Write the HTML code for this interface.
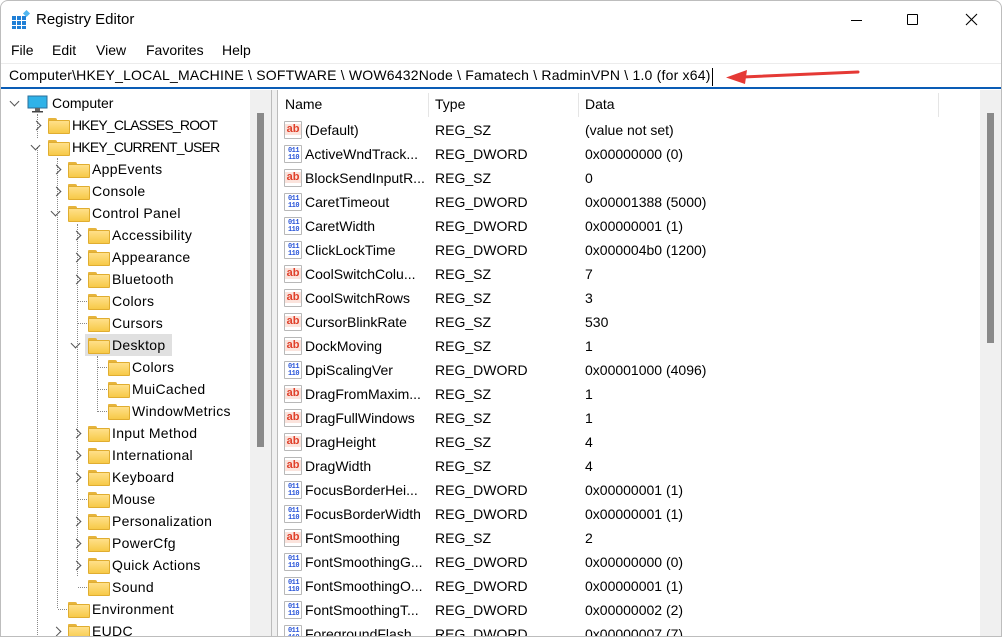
<!DOCTYPE html>
<html><head><meta charset="utf-8">
<style>
*{margin:0;padding:0;box-sizing:border-box}
body{width:1002px;height:639px;background:#fff;font-family:"Segoe UI","Liberation Sans",sans-serif;font-size:14px;color:#000;position:relative;overflow:hidden}
.win{position:absolute;left:0;top:0;width:1002px;height:637px;border:1px solid #bdbdbd;border-radius:8px 8px 0 0;background:#fff;overflow:hidden}
.a{position:absolute;white-space:nowrap}
.fold{position:absolute;width:20px;height:14px}
.fold:before{content:"";position:absolute;left:0;top:0;width:9px;height:3px;background:#e6b43c;border-radius:1px 2px 0 0}
.fold:after{content:"";position:absolute;left:0;top:2px;width:20px;height:12px;background:linear-gradient(#ffe08a,#f7c948);border:1px solid #e0ad30;border-radius:1px}
.ch{position:absolute;width:7px;height:7px;border-right:1.3px solid #555;border-bottom:1.3px solid #555}
.r{transform:rotate(-45deg)}
.d{transform:rotate(45deg)}
.t{position:absolute;white-space:nowrap;line-height:22px}
.ic{position:absolute;width:18px;height:18px;border:1px solid #b8b8b8;background:#fff;border-radius:1px;font-weight:bold;text-align:center}
.ab{color:#e0402a;background:#fbe3dc;font-size:11px;line-height:11px;height:11px;width:16px;position:absolute;left:0;top:2px;font-family:"Liberation Sans",sans-serif}
.bn{color:#2a55d8;font-size:7px;line-height:7px;position:absolute;left:1px;top:2px;width:15px;font-family:"Liberation Mono",monospace;letter-spacing:-0.5px}
.row{position:absolute;left:283px;height:24px;line-height:24px;width:690px}
.row span{position:absolute;top:0}
</style></head><body>
<div class="win">
<svg class="a" style="left:10px;top:9px" width="20" height="20" viewBox="0 0 20 20">
<g fill="#1f7fd6"><rect x="1" y="6" width="4" height="4"/><rect x="6" y="6" width="4" height="4"/><rect x="1" y="11" width="4" height="4"/><rect x="6" y="11" width="4" height="4"/><rect x="11" y="11" width="4" height="4"/><rect x="1" y="16" width="4" height="3"/><rect x="6" y="16" width="4" height="3"/><rect x="11" y="16" width="4" height="3"/><rect x="11" y="6" width="4" height="4"/></g>
<rect x="13" y="1" width="5" height="5" fill="#52b7f0" transform="rotate(45 15.5 3.5)"/></svg>
<div class="a" style="left:35px;top:10px;font-size:15px">Registry Editor</div>
<div class="a" style="left:850px;top:19px;width:11px;height:1px;background:#000"></div>
<div class="a" style="left:906px;top:13px;width:11px;height:11px;border:1px solid #000;border-radius:1px"></div>
<svg class="a" style="left:964px;top:12px" width="13" height="13"><path d="M1 1L12 12M12 1L1 12" stroke="#000" stroke-width="1.1"/></svg>
<div class="a" style="left:10px;top:41px">File</div>
<div class="a" style="left:51px;top:41px">Edit</div>
<div class="a" style="left:95px;top:41px">View</div>
<div class="a" style="left:145px;top:41px">Favorites</div>
<div class="a" style="left:221px;top:41px">Help</div>
<div class="a" style="left:0;top:62px;width:1002px;height:1px;background:#ececec"></div>
<div class="a" style="left:8px;top:66px;font-size:14px;letter-spacing:0.2px">Computer\HKEY_LOCAL_MACHINE \ SOFTWARE \ WOW6432Node \ Famatech \ RadminVPN \ 1.0 (for x64)</div>
<div class="a" style="left:711px;top:67px;width:1px;height:18px;background:#000"></div>
<svg class="a" style="left:722px;top:66px" width="140" height="18"><path d="M135 5L20 10" stroke="#e53935" stroke-width="3" stroke-linecap="round"/><path d="M3 10.5L24 3L22 17Z" fill="#e53935"/></svg>
<div class="a" style="left:0;top:86px;width:1002px;height:2px;background:#0a5cb5"></div>
<div class="a" style="left:249px;top:89px;width:21px;height:550px;background:#f0f0f0"></div>
<div class="a" style="left:256px;top:112px;width:7px;height:334px;background:#8a8a8a"></div>
<div class="a" style="left:270px;top:89px;width:1px;height:550px;background:#bcbcbc"></div>
<div class="a" style="left:271px;top:89px;width:5px;height:550px;background:#f0f0f0"></div>
<div class="a" style="left:276px;top:89px;width:1px;height:550px;background:#bcbcbc"></div>
<div class="a" style="left:36px;top:113px;height:24px;border-left:1px dotted #888"></div>
<div class="a" style="left:36px;top:146px;height:490px;border-left:1px dotted #888"></div>
<div class="a" style="left:56px;top:157px;height:450px;border-left:1px dotted #888"></div>
<div class="a" style="left:76px;top:223px;height:352px;border-left:1px dotted #888"></div>
<div class="a" style="left:96px;top:355px;height:56px;border-left:1px dotted #888"></div>
<svg class="a" style="left:26px;top:94px" width="21" height="18"><rect x="1" y="1" width="19" height="12" fill="#2fb2e8" stroke="#2b6f9a"/><rect x="8" y="13" width="5" height="3" fill="#666"/><rect x="5" y="16" width="11" height="1.5" fill="#444"/></svg>
<div class="ch d" style="left:10px;top:97px"></div>
<div class="t" style="left:51px;top:91px">Computer</div>
<div class="a" style="left:84px;top:333px;width:87px;height:22px;background:#e0e0e0"></div>
<div id="tree"></div>
<div class="a" style="left:427px;top:92px;width:1px;height:24px;background:#e5e5e5"></div>
<div class="a" style="left:577px;top:92px;width:1px;height:24px;background:#e5e5e5"></div>
<div class="a" style="left:937px;top:92px;width:1px;height:24px;background:#e5e5e5"></div>
<div class="a" style="left:284px;top:95px">Name</div>
<div class="a" style="left:434px;top:95px">Type</div>
<div class="a" style="left:584px;top:95px">Data</div>
<div class="a" style="left:979px;top:89px;width:21px;height:550px;background:#f0f0f0"></div>
<div class="a" style="left:986px;top:112px;width:7px;height:230px;background:#8a8a8a"></div>
<div id="list"></div>
</div>
<script>
var tree=[[1,"HKEY_CLASSES_ROOT","r"],[1,"HKEY_CURRENT_USER","d"],[2,"AppEvents","r"],[2,"Console","r"],[2,"Control Panel","d"],[3,"Accessibility","r"],[3,"Appearance","r"],[3,"Bluetooth","r"],[3,"Colors",""],[3,"Cursors",""],[3,"Desktop","d"],[4,"Colors",""],[4,"MuiCached",""],[4,"WindowMetrics",""],[3,"Input Method","r"],[3,"International","r"],[3,"Keyboard","r"],[3,"Mouse",""],[3,"Personalization","r"],[3,"PowerCfg","r"],[3,"Quick Actions","r"],[3,"Sound",""],[2,"Environment",""],[2,"EUDC","r"]];
var h="";
tree.forEach(function(e,i){var y=113+22*i,fx=27+20*e[0];
var ls=e[1].indexOf("HKEY")==0?"letter-spacing:-0.8px;":"letter-spacing:0.3px;";
if(e[2]=="r")h+='<div class="ch r" style="left:'+(fx-15)+'px;top:'+(y+8)+'px"></div>';
else if(e[2]=="d")h+='<div class="ch d" style="left:'+(fx-16)+'px;top:'+(y+6)+'px"></div>';
else h+='<div class="a" style="left:'+(fx-10)+'px;top:'+(y+11)+'px;width:9px;border-top:1px dotted #888"></div>';
h+='<div class="fold" style="left:'+fx+'px;top:'+(y+4)+'px"></div><div class="t" style="left:'+(fx+24)+'px;top:'+y+'px;'+ls+'">'+e[1]+'</div>';});
document.getElementById("tree").innerHTML=h;
var L=[["(Default)","s","(value not set)"],["ActiveWndTrack...","d","0x00000000 (0)"],["BlockSendInputR...","s","0"],["CaretTimeout","d","0x00001388 (5000)"],["CaretWidth","d","0x00000001 (1)"],["ClickLockTime","d","0x000004b0 (1200)"],["CoolSwitchColu...","s","7"],["CoolSwitchRows","s","3"],["CursorBlinkRate","s","530"],["DockMoving","s","1"],["DpiScalingVer","d","0x00001000 (4096)"],["DragFromMaxim...","s","1"],["DragFullWindows","s","1"],["DragHeight","s","4"],["DragWidth","s","4"],["FocusBorderHei...","d","0x00000001 (1)"],["FocusBorderWidth","d","0x00000001 (1)"],["FontSmoothing","s","2"],["FontSmoothingG...","d","0x00000000 (0)"],["FontSmoothingO...","d","0x00000001 (1)"],["FontSmoothingT...","d","0x00000002 (2)"],["ForegroundFlash...","d","0x00000007 (7)"]];
h="";
L.forEach(function(e,i){var y=117+24*i;
var ic=e[1]=="s"?'<div class="ic" style="left:0;top:3px"><div class="ab">ab</div></div>':'<div class="ic" style="left:0;top:3px"><div class="bn">011<br>110</div></div>';
h+='<div class="row" style="top:'+y+'px">'+ic+'<span style="left:21px">'+e[0]+'</span><span style="left:151px">'+(e[1]=="s"?"REG_SZ":"REG_DWORD")+'</span><span style="left:301px">'+e[2]+'</span></div>';});
document.getElementById("list").innerHTML=h;
</script>
</body></html>
